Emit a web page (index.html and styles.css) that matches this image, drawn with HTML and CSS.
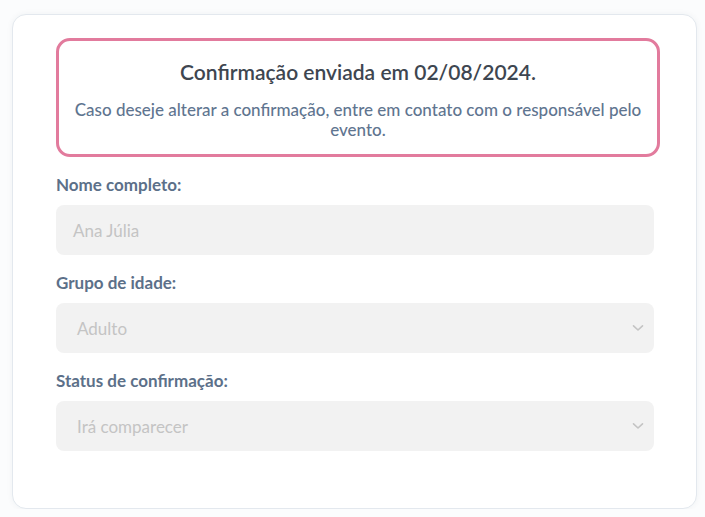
FILE: index.html
```html
<!DOCTYPE html>
<html lang="pt-BR">
<head>
<meta charset="utf-8">
<link rel="stylesheet" href="styles.css">
</head>
<body>
<div class="card">
  <div class="notice">
    <h2 class="notice-title">Confirmação enviada em 02/08/2024.</h2>
    <p class="notice-text">Caso deseje alterar a confirmação, entre em contato com o responsável pelo evento.</p>
  </div>
  <div class="field">
    <label class="label">Nome completo:</label>
    <div class="input"><span class="value">Ana Júlia</span></div>
  </div>
  <div class="field">
    <label class="label">Grupo de idade:</label>
    <div class="input select"><span class="value">Adulto</span>
      <svg class="chev" width="12" height="8" viewBox="0 0 12 8"><path d="M1.5 1.8 L6 6 L10.5 1.8" fill="none" stroke="#c4c4c4" stroke-width="1.6" stroke-linecap="round" stroke-linejoin="round"/></svg>
    </div>
  </div>
  <div class="field">
    <label class="label">Status de confirmação:</label>
    <div class="input select"><span class="value">Irá comparecer</span>
      <svg class="chev" width="12" height="8" viewBox="0 0 12 8"><path d="M1.5 1.8 L6 6 L10.5 1.8" fill="none" stroke="#c4c4c4" stroke-width="1.6" stroke-linecap="round" stroke-linejoin="round"/></svg>
    </div>
  </div>
</div>
</body>
</html>
```

FILE: styles.css
```css
html, body {
  margin: 0;
  padding: 0;
  background: #fbfcfd;
  font-family: Lato, "Open Sans", sans-serif;
}
.card {
  margin: 14px 8px 0 12px;
  height: 495px;
  box-sizing: border-box;
  background: #ffffff;
  border: 1px solid #e3e8ee;
  border-radius: 14px;
  box-shadow: 0 0 6px rgba(30, 50, 80, 0.05);
  padding: 23px 42px 0 43px;
}
.notice {
  margin-right: -6px;
  border: 3px solid #e27b9d;
  border-radius: 14px;
  padding: 19px 8px 14px;
  text-align: center;
}
.notice-title {
  margin: 0;
  font-size: 21px;
  line-height: 24px;
  font-weight: 600;
  color: #3e4650;
}
.notice-text {
  margin: 16px 0 0;
  font-size: 17px;
  line-height: 20px;
  font-weight: 500;
  color: #5f7590;
}
.field {
  display: flex;
  flex-direction: column;
  margin-top: 18px;
}
.label {
  font-size: 17px;
  line-height: 20px;
  font-weight: 700;
  color: #5c7089;
}
.input {
  margin-top: 10px;
  height: 50px;
  box-sizing: border-box;
  background: #f2f2f2;
  border-radius: 8px;
  display: flex;
  align-items: center;
  justify-content: space-between;
  padding: 0 10px 0 17px;
}
.select {
  padding-left: 21px;
}
.value {
  font-size: 17px;
  color: #c4c4c4;
}
.chev {
  display: block;
}
```
